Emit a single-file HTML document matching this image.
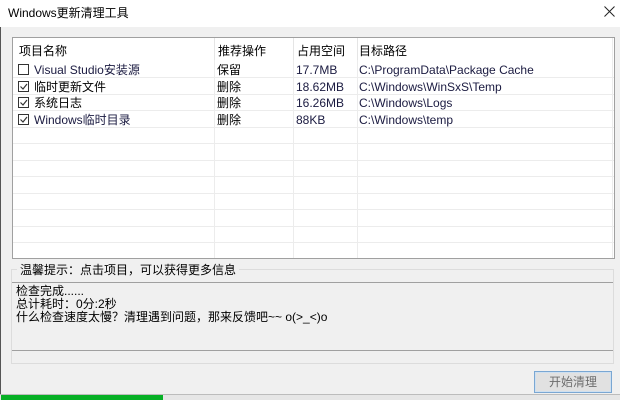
<!DOCTYPE html>
<html><head><meta charset="utf-8"><style>
*{margin:0;padding:0;box-sizing:border-box}
body{width:620px;height:400px;background:#f0f0f0;position:relative;overflow:hidden;font-family:"Liberation Sans","Noto Sans CJK SC",sans-serif;font-size:12px;color:#000}
.a{position:absolute}
.t{white-space:nowrap;line-height:16px}
</style></head><body>
<div class="a" style="left:0;top:0;width:620px;height:27px;background:#fff"></div>
<div class="a t" style="left:8px;top:5px;font-size:12px">Windows更新清理工具</div>
<svg class="a" style="left:604px;top:6px" width="11" height="11"><path d="M0.5 0.5L10.5 10.5M10.5 0.5L0.5 10.5" stroke="#222" stroke-width="1"/></svg>
<div class="a" style="left:0;top:27px;width:1px;height:373px;background:#555"></div>

<div class="a" style="left:12px;top:37px;width:603px;height:222px;background:#fff;border:1px solid #a0a0a0"></div>
<svg class="a" style="left:13px;top:38px" width="601" height="220">
<g stroke="#ececec" stroke-width="1">
<line x1="201.5" y1="0" x2="201.5" y2="220"/><line x1="280.5" y1="0" x2="280.5" y2="220"/><line x1="344.5" y1="0" x2="344.5" y2="220"/><line x1="599.5" y1="0" x2="599.5" y2="220"/>
<line x1="0" y1="39.5" x2="601" y2="39.5"/><line x1="0" y1="56.5" x2="601" y2="56.5"/><line x1="0" y1="72.5" x2="601" y2="72.5"/><line x1="0" y1="89.5" x2="601" y2="89.5"/><line x1="0" y1="105.5" x2="601" y2="105.5"/><line x1="0" y1="122.5" x2="601" y2="122.5"/><line x1="0" y1="138.5" x2="601" y2="138.5"/><line x1="0" y1="155.5" x2="601" y2="155.5"/><line x1="0" y1="171.5" x2="601" y2="171.5"/><line x1="0" y1="188.5" x2="601" y2="188.5"/><line x1="0" y1="204.5" x2="601" y2="204.5"/>
</g>
<g stroke="#e5e5e5"><line x1="201.5" y1="0" x2="201.5" y2="22"/><line x1="280.5" y1="0" x2="280.5" y2="22"/><line x1="344.5" y1="0" x2="344.5" y2="22"/></g>
<g fill="#fff" stroke="#333" stroke-width="1">
<rect x="5.5" y="26.5" width="10" height="10"/><rect x="5.5" y="43.5" width="10" height="10"/><rect x="5.5" y="59.5" width="10" height="10"/><rect x="5.5" y="76.5" width="10" height="10"/>
</g>
<g fill="none" stroke="#333" stroke-width="1.2">
<path d="M7.5 48.5l2.5 2.5 4-5"/><path d="M7.5 64.5l2.5 2.5 4-5"/><path d="M7.5 81.5l2.5 2.5 4-5"/>
</g>
</svg>
<div class="a t" style="left:19px;top:43px">项目名称</div>
<div class="a t" style="left:218px;top:43px">推荐操作</div>
<div class="a t" style="left:297px;top:43px">占用空间</div>
<div class="a t" style="left:359px;top:43px">目标路径</div>

<div class="a t" style="left:34px;top:62px;color:#1a1a40">Visual Studio安装源</div>
<div class="a t" style="left:34px;top:79px">临时更新文件</div>
<div class="a t" style="left:34px;top:95px">系统日志</div>
<div class="a t" style="left:34px;top:112px;color:#1a1a40">Windows临时目录</div>
<div class="a t" style="left:217px;top:62px">保留</div>
<div class="a t" style="left:217px;top:79px">删除</div>
<div class="a t" style="left:217px;top:95px">删除</div>
<div class="a t" style="left:217px;top:112px">删除</div>
<div class="a t" style="left:296px;top:62px;color:#1a1a40">17.7MB</div>
<div class="a t" style="left:296px;top:79px;color:#1a1a40">18.62MB</div>
<div class="a t" style="left:296px;top:95px;color:#1a1a40">16.26MB</div>
<div class="a t" style="left:296px;top:112px;color:#1a1a40">88KB</div>
<div class="a t" style="left:359px;top:62px;color:#1a1a40">C:\ProgramData\Package Cache</div>
<div class="a t" style="left:359px;top:79px;color:#1a1a40">C:\Windows\WinSxS\Temp</div>
<div class="a t" style="left:359px;top:95px;color:#1a1a40">C:\Windows\Logs</div>
<div class="a t" style="left:359px;top:112px;color:#1a1a40">C:\Windows\temp</div>

<div class="a" style="left:11px;top:269px;width:603px;height:95px;border:1px solid #dcdcdc"></div>
<div class="a t" style="left:17px;top:262px;padding:0 3px;background:#f0f0f0">温馨提示：点击项目，可以获得更多信息</div>
<div class="a" style="left:12px;top:282px;width:601px;height:69px;border-top:1px solid #a0a0a0;border-bottom:1px solid #a0a0a0"></div>
<div class="a t" style="left:16px;top:285px;line-height:13px">检查完成......<br>总计耗时：0分:2秒<br>什么检查速度太慢？清理遇到问题，那来反馈吧~~ o(&gt;_&lt;)o</div>

<div class="a" style="left:534px;top:371px;width:78px;height:22px;border:1px solid #7aa7d3;background:#e1e1e1;box-shadow:inset 0 0 0 1px #cfe0f0"></div>
<div class="a t" style="left:534px;top:374px;width:78px;text-align:center;color:#6d6d6d">开始清理</div>

<div class="a" style="left:0;top:394px;width:620px;height:6px;background:#e6e6e6;border-top:1px solid #bcbcbc"></div>
<div class="a" style="left:1px;top:395px;width:162px;height:5px;background:#06b025"></div>
</body></html>
